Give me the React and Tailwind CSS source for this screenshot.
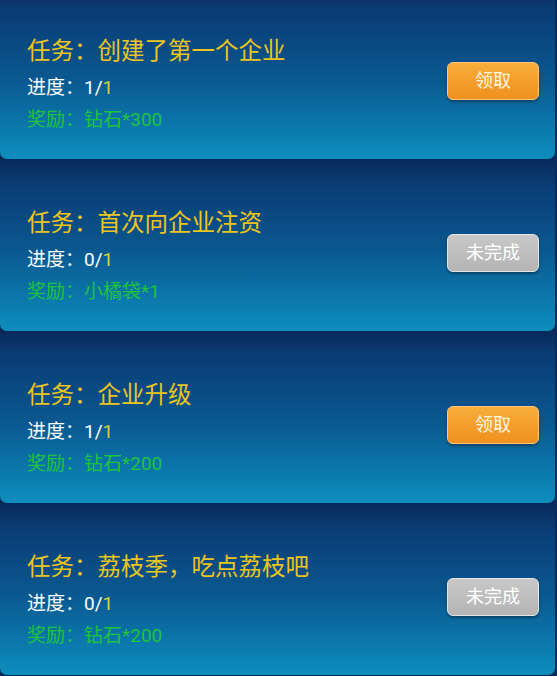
import React from "react";

// ── Data ─────────────────────────────────────────────────────────────────────
const tasks = [
  { title: "创建了第一个企业", done: 1, total: 1, reward: "钻石*300", claimable: true },
  { title: "首次向企业注资", done: 0, total: 1, reward: "小橘袋*1", claimable: false },
  { title: "企业升级", done: 1, total: 1, reward: "钻石*200", claimable: true },
  { title: "荔枝季，吃点荔枝吧", done: 0, total: 1, reward: "钻石*200", claimable: false },
];

const FONT = { fontFamily: 'Roboto, "Noto Sans CJK SC", sans-serif' };

// ── Buttons ──────────────────────────────────────────────────────────────────
function ClaimButton() {
  return (
    <button className="w-[92px] h-[38px] rounded-[6px] border border-[#ffc777] bg-[linear-gradient(to_bottom,#f9ae3c,#ef901e)] text-[#fff6e2] text-[18px] leading-none shadow-[0_2px_3px_rgba(0,0,0,0.35)] flex items-center justify-center">
      领取
    </button>
  );
}

function PendingButton() {
  return (
    <button className="w-[92px] h-[38px] rounded-[6px] border border-[#e6e6e6] bg-[linear-gradient(to_bottom,#c8c8c8,#b4b4b4)] text-white text-[18px] leading-none shadow-[0_2px_3px_rgba(0,0,0,0.35)] flex items-center justify-center">
      未完成
    </button>
  );
}

// ── Task card ────────────────────────────────────────────────────────────────
function TaskCard({ task }) {
  return (
    <div className="h-[172px] mr-[2px] rounded-b-[7px] bg-[linear-gradient(to_bottom,#08295a_0%,#0a3a72_12%,#0a5a92_55%,#0c8ebd_100%)] shadow-[0_1px_0_#062248] flex items-start justify-between pl-[27px] pr-[16px] pt-[49px]">
      <div className="flex flex-col">
        <div className="text-[23.5px] leading-[30px] text-[#ecc51e]">任务：{task.title}</div>
        <div className="mt-[7px] text-[19px] leading-[30px] text-white">
          进度：{task.done}/<span className="text-[#cfd43c]">{task.total}</span>
        </div>
        <div className="mt-[2px] text-[19px] leading-[30px] text-[#1fc23f]">奖励：{task.reward}</div>
      </div>
      <div className="mt-[26px]">
        {task.claimable ? <ClaimButton /> : <PendingButton />}
      </div>
    </div>
  );
}

// ── Page ─────────────────────────────────────────────────────────────────────
export default function App() {
  return (
    <div className="w-[557px] h-[676px] overflow-hidden bg-[#082c5a]" style={FONT}>
      <div className="-mt-[13px] flex flex-col">
        {tasks.map((t, i) => (
          <TaskCard key={i} task={t} />
        ))}
      </div>
    </div>
  );
}
